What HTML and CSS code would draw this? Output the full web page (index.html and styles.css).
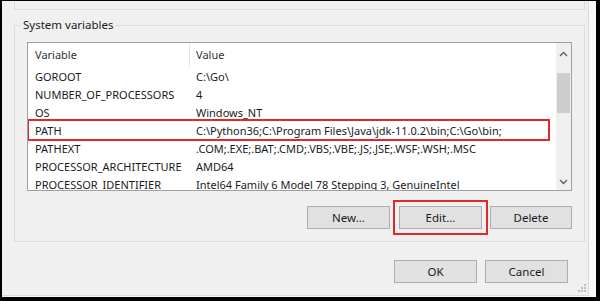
FILE: index.html
```html
<!DOCTYPE html>
<html lang="en">
<head>
    <meta charset="UTF-8">
    <title>Environment Variables</title>
    <link rel="stylesheet" href="styles.css">
</head>
<body>
    <div class="screen">
        <div class="dialog">
            <div class="user-group"></div>

            <fieldset class="group">
                <legend>System variables</legend>

                <div class="listbox">
                    <div class="list">
                        <div class="list-head">
                            <div class="col-name">Variable</div>
                            <div class="col-value">Value</div>
                        </div>
                        <div class="row"><div class="col-name">GOROOT</div><div class="col-value">C:\Go\</div></div>
                        <div class="row"><div class="col-name">NUMBER_OF_PROCESSORS</div><div class="col-value">4</div></div>
                        <div class="row"><div class="col-name">OS</div><div class="col-value">Windows_NT</div></div>
                        <div class="row marked"><div class="col-name">PATH</div><div class="col-value">C:\Python36;C:\Program Files\Java\jdk-11.0.2\bin;C:\Go\bin;</div></div>
                        <div class="row"><div class="col-name">PATHEXT</div><div class="col-value">.COM;.EXE;.BAT;.CMD;.VBS;.VBE;.JS;.JSE;.WSF;.WSH;.MSC</div></div>
                        <div class="row"><div class="col-name">PROCESSOR_ARCHITECTURE</div><div class="col-value">AMD64</div></div>
                        <div class="row"><div class="col-name">PROCESSOR_IDENTIFIER</div><div class="col-value">Intel64 Family 6 Model 78 Stepping 3, GenuineIntel</div></div>
                    </div>
                    <div class="scrollbar">
                        <div class="arrow">
                            <svg width="9" height="6" viewBox="0 0 9 6"><path d="M1 5 L4.5 1.5 L8 5" fill="none" stroke="#606060" stroke-width="1.4"/></svg>
                        </div>
                        <div class="thumb"></div>
                        <div class="track"></div>
                        <div class="arrow">
                            <svg width="9" height="6" viewBox="0 0 9 6"><path d="M1 1 L4.5 4.5 L8 1" fill="none" stroke="#606060" stroke-width="1.4"/></svg>
                        </div>
                    </div>
                </div>

                <div class="buttons">
                    <button class="btn">New...</button>
                    <button class="btn marked-btn">Edit...</button>
                    <button class="btn narrow">Delete</button>
                </div>
            </fieldset>

            <div class="buttons footer">
                <button class="btn">OK</button>
                <button class="btn">Cancel</button>
            </div>

            <svg class="grip" width="9" height="9" viewBox="0 0 9 9">
                <rect x="6" y="0" width="2" height="2" fill="#bcbcbc"/>
                <rect x="3" y="3" width="2" height="2" fill="#bcbcbc"/>
                <rect x="6" y="3" width="2" height="2" fill="#bcbcbc"/>
                <rect x="0" y="6" width="2" height="2" fill="#bcbcbc"/>
                <rect x="3" y="6" width="2" height="2" fill="#bcbcbc"/>
                <rect x="6" y="6" width="2" height="2" fill="#bcbcbc"/>
            </svg>
        </div>
    </div>
</body>
</html>
```

FILE: styles.css
```css
* {
    margin: 0;
    padding: 0;
    box-sizing: border-box;
}

body {
    font-family: "Noto Sans", "Open Sans", sans-serif;
    font-size: 11px;
    color: #1a1a1a;
    background: #000;
}

.screen {
    width: 600px;
    height: 301px;
    border-style: solid;
    border-color: #000;
    border-width: 1px 4px 4px 2px;
    background: #f9f9f9;
}

.dialog {
    position: relative;
    width: 587px;
    height: 295px;
    background: #f0f0f0;
    border-right: 1px solid #dadada;
    border-bottom: 1px solid #dadada;
    padding-left: 12px;
}

.user-group {
    width: 571px;
    height: 9px;
    border: 1px solid #dcdcdc;
    border-top: none;
}

.group {
    width: 571px;
    margin-top: 7px;
    border: 1px solid #dcdcdc;
    padding: 9px 12px 12px;
}

.group legend {
    margin-left: -6px;
    padding: 0 2px;
    line-height: 16px;
    font-size: 11.5px;
    color: #1a1a1a;
}

.listbox {
    display: flex;
    height: 149px;
    border: 1px solid #a0a0a0;
    background: #fff;
    overflow: hidden;
}

.list {
    flex: 1;
}

.list-head,
.row {
    display: flex;
    white-space: nowrap;
}

.list-head {
    height: 24px;
    color: #333;
}

.list-head .col-name {
    border-right: 1px solid #e5e5e5;
}

.list-head div {
    height: 24px;
    line-height: 24px;
}

.row {
    height: 18px;
    line-height: 18px;
    padding-top: 1px;
}

.col-name {
    width: 162px;
    padding-left: 7px;
    flex-shrink: 0;
}

.col-value {
    padding-left: 6px;
}

.marked {
    position: relative;
}

.marked::after {
    content: "";
    position: absolute;
    left: -1px;
    right: 6px;
    top: -2px;
    bottom: -2px;
    border: 2px solid #e0282d;
}

.scrollbar {
    width: 15px;
    display: flex;
    flex-direction: column;
    background: #f0f0f0;
}

.arrow {
    height: 17px;
    display: flex;
    align-items: center;
    justify-content: center;
}

.arrow:first-child {
    height: 30px;
    padding-bottom: 8px;
}

.thumb {
    height: 40px;
    margin: 0 1px;
    background: #cdcdcd;
}

.track {
    flex: 1;
}

.buttons {
    display: flex;
    justify-content: flex-end;
    gap: 8px;
    margin-top: 15px;
}

.btn {
    width: 83px;
    height: 23px;
    font-family: inherit;
    font-size: 11.5px;
    color: #1a1a1a;
    background: #e1e1e1;
    border: 1px solid #adadad;
}

.btn.narrow {
    width: 82px;
}

.buttons .btn:first-child {
    margin-right: 1px;
}

.marked-btn {
    outline: 2px solid #e0282d;
    outline-offset: 4px;
}

.footer {
    width: 571px;
    margin-top: 18px;
    padding-right: 17px;
}

.footer .btn:first-child {
    margin-right: 0;
}

.grip {
    position: absolute;
    right: 1px;
    bottom: 2px;
}
```
